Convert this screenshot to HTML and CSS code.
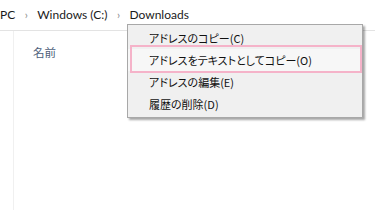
FILE: index.html
```html
<!DOCTYPE html>
<html lang="ja">
<head>
  <meta charset="UTF-8">
  <title>Downloads</title>
  <link rel="stylesheet" href="styles.css">
</head>
<body>

<div class="crumbs">
  <span class="crumb">PC</span>
  <span class="sep">›</span>
  <span class="crumb">Windows (C:)</span>
  <span class="sep">›</span>
  <span class="crumb">Downloads</span>
</div>

<div class="files">
  <div class="pane">
    <div class="col-head">名前</div>
  </div>
</div>

<ul class="menu">
  <li>アドレスのコピー(C)</li>
  <li class="marked">アドレスをテキストとしてコピー(O)</li>
  <li>アドレスの編集(E)</li>
  <li>履歴の削除(D)</li>
</ul>

</body>
</html>
```

FILE: styles.css
```css
* {margin:0;padding:0;box-sizing:border-box;}
body {
  width: 375px;
  height: 210px;
  background: #fff;
  font-family: "Noto Sans", "Noto Sans CJK JP", sans-serif;
  color: #1a1a1a;
  position: relative;
  overflow: hidden;
}
.crumbs {
  height: 31px;
  border-bottom: 1px solid #e3e3e3;
  display: flex;
  align-items: center;
  font-family: Lato, "Noto Sans", sans-serif;
  font-size: 12px;
  padding-bottom: 1px;
}
.sep {
  color: #8a8a8a;
  font-size: 11px;
  width: 22px;
  text-align: center;
}

.files {
  height: 179px;
  display: flex;
}
.pane {
  margin-left: 13px;
  border-left: 1px solid #f0f0f0;
  padding: 13px 0 0 19px;
  flex: 1;
}
.col-head {
  font-family: "Noto Sans CJK JP", sans-serif;
  font-size: 11.5px;
  color: #4c607a;
}

.menu {
  list-style: none;
  position: absolute;
  left: 127px;
  top: 24px;
  width: 236px;
  padding: 2px 0;
  background: #f0f0f0;
  border: 1px solid #a8a8a8;
  box-shadow: 2px 2px 2px rgba(0,0,0,0.35);
  font-family: "Noto Sans CJK JP", sans-serif;
  font-size: 11px;
  font-feature-settings: "palt";
  color: #111;
}
.menu li {
  height: 22px;
  line-height: 22px;
  padding-left: 21px;
  position: relative;
}
.menu li.marked { background: #f7f7f7; }
.menu li.marked::after {
  content: "";
  position: absolute;
  left: 2px;
  right: 0;
  top: -4px;
  bottom: -2px;
  border: 2px solid #f5b3c9;
}
```
